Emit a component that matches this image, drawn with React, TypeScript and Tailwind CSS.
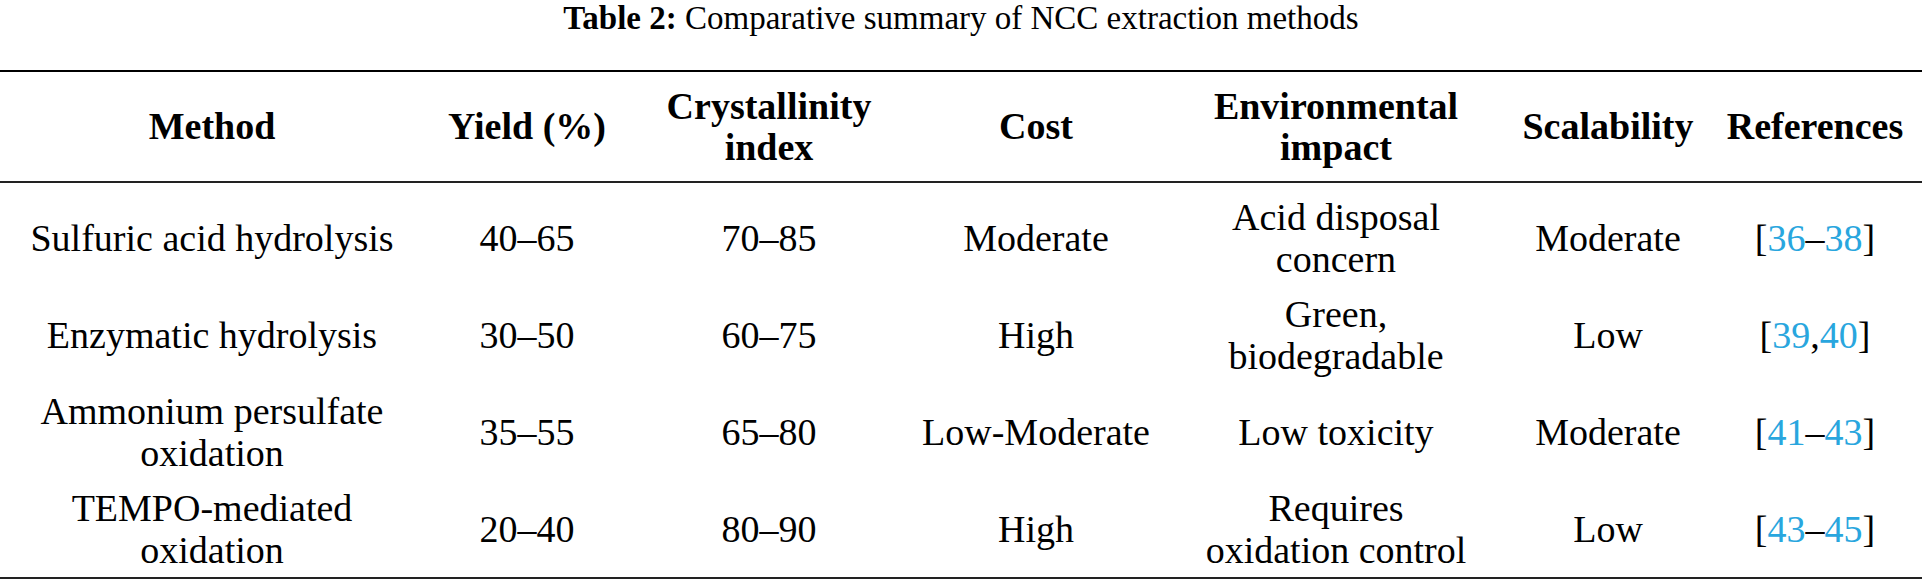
const cols = 'grid grid-cols-[424px_206px_278px_256px_344px_200px_214px]';

type Ref = { a: string; sep: string; b: string };

const rows: { method: string[]; yieldPct: string; ci: string; cost: string; env: string[]; scale: string; ref: Ref }[] = [
  { method: ['Sulfuric acid hydrolysis'], yieldPct: '40–65', ci: '70–85', cost: 'Moderate', env: ['Acid disposal', 'concern'], scale: 'Moderate', ref: { a: '36', sep: '–', b: '38' } },
  { method: ['Enzymatic hydrolysis'], yieldPct: '30–50', ci: '60–75', cost: 'High', env: ['Green,', 'biodegradable'], scale: 'Low', ref: { a: '39', sep: ',', b: '40' } },
  { method: ['Ammonium persulfate', 'oxidation'], yieldPct: '35–55', ci: '65–80', cost: 'Low-Moderate', env: ['Low toxicity'], scale: 'Moderate', ref: { a: '41', sep: '–', b: '43' } },
  { method: ['TEMPO-mediated', 'oxidation'], yieldPct: '20–40', ci: '80–90', cost: 'High', env: ['Requires', 'oxidation control'], scale: 'Low', ref: { a: '43', sep: '–', b: '45' } },
];

function Cell({ lines }: { lines: string[] }) {
  return (
    <div className="flex flex-col items-center justify-center text-center">
      {lines.map((l) => (
        <span key={l} className="whitespace-nowrap">{l}</span>
      ))}
    </div>
  );
}

export default function App() {
  return (
    <div className="w-[1922px] h-[582px] bg-white text-black font-['Liberation_Serif',serif] overflow-hidden">
      {/* Caption */}
      <div className="h-[70px] text-center text-[33px] leading-[36px]">
        <span className="font-bold">Table 2:</span> Comparative summary of NCC extraction methods
      </div>

      {/* Header */}
      <div className={`${cols} h-[113px] border-t-2 border-b-2 border-t-black border-b-[#222] text-[38px] leading-[41px] font-bold`}>
        <Cell lines={['Method']} />
        <Cell lines={['Yield (%)']} />
        <Cell lines={['Crystallinity', 'index']} />
        <Cell lines={['Cost']} />
        <Cell lines={['Environmental', 'impact']} />
        <Cell lines={['Scalability']} />
        <Cell lines={['References']} />
      </div>

      {/* Body */}
      <div className="pt-[6px] border-b-2 border-[#222] text-[38px] leading-[42px]">
        {rows.map((r) => (
          <div key={r.method.join(' ')} className={`${cols} h-[97px]`}>
            <Cell lines={r.method} />
            <Cell lines={[r.yieldPct]} />
            <Cell lines={[r.ci]} />
            <Cell lines={[r.cost]} />
            <Cell lines={r.env} />
            <Cell lines={[r.scale]} />
            <div className="flex items-center justify-center whitespace-nowrap">
              [<span className="text-[#29a6de]">{r.ref.a}</span>
              {r.ref.sep}
              <span className="text-[#29a6de]">{r.ref.b}</span>]
            </div>
          </div>
        ))}
      </div>
    </div>
  );
}
